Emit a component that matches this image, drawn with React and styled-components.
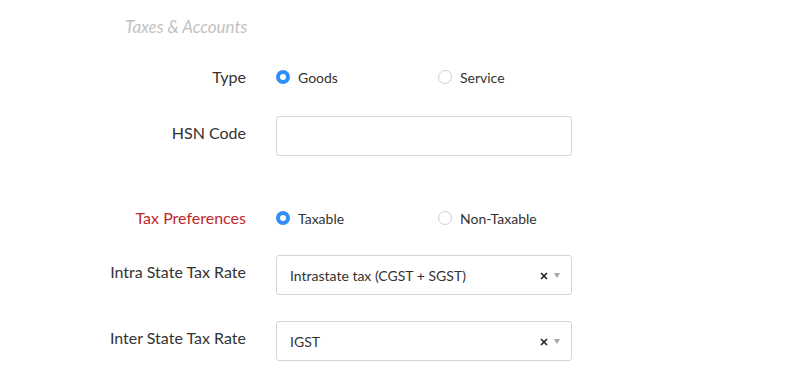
import React, { useState } from 'react';
import styled, { createGlobalStyle } from 'styled-components';

const GlobalStyle = createGlobalStyle`
    body {
        margin: 0;
        background: #ffffff;
        font-family: Lato, "Open Sans", sans-serif;
        color: #333333;
    }
`;

const Page = styled.div`
    padding: 16px 0 0 0;
`;

const Heading = styled.div`
    padding-left: 125px;
    font-size: 17px;
    font-style: italic;
    color: #c2c2c2;
    line-height: 22px;
`;

const Form = styled.div`
    display: grid;
    grid-template-columns: 246px 296px;
    column-gap: 30px;
    margin-top: 29px;
`;

const Label = styled.div`
    text-align: right;
    font-size: 16px;
    line-height: 20px;
    color: ${props => props.required ? '#c1272d' : '#333333'};
    padding-top: ${props => props.offset || 0}px;
    margin-top: ${props => props.gap || 0}px;
`;

const Field = styled.div`
    margin-top: ${props => props.gap || 0}px;
`;

const RadioGroup = styled.div`
    display: flex;
    height: 20px;
    align-items: center;
`;

const RadioOption = styled.label`
    display: flex;
    flex-shrink: 0;
    align-items: center;
    width: 162px;
    font-size: 14px;
    color: #333333;
    cursor: pointer;
`;

const RadioCircle = styled.span`
    box-sizing: border-box;
    flex-shrink: 0;
    width: 14px;
    height: 14px;
    border-radius: 50%;
    margin-right: 8px;
    border: ${props => props.checked ? '4px solid #2f8ff5' : '1px solid #cfcfcf'};
    background: #ffffff;
`;

const TextInput = styled.input`
    box-sizing: border-box;
    width: 296px;
    height: 40px;
    border: 1px solid #d3d3d3;
    border-radius: 3px;
    outline: none;
    padding: 0 13px;
    font-size: 14px;
    font-family: inherit;
`;

const Select = styled.div`
    box-sizing: border-box;
    width: 296px;
    height: 40px;
    border: 1px solid #d3d3d3;
    border-radius: 3px;
    display: flex;
    align-items: center;
    padding: 0 11px 0 13px;
    font-size: 14px;
    color: #333333;
`;

const SelectValue = styled.span`
    flex: 1;
`;

const Clear = styled.svg`
    width: 8px;
    height: 8px;
    margin-right: 6px;
    margin-top: 2px;
`;

const Caret = styled.span`
    width: 0;
    height: 0;
    border-left: 3.5px solid transparent;
    border-right: 3.5px solid transparent;
    border-top: 5px solid #a8a8a8;
`;

const Radio = ({ options, value, onChange }) => (
    <RadioGroup>
        {options.map(opt => (
            <RadioOption key={opt} onClick={() => onChange(opt)}>
                <RadioCircle checked={value === opt} />
                {opt}
            </RadioOption>
        ))}
    </RadioGroup>
);

const TaxSelect = ({ value }) => (
    <Select>
        <SelectValue>{value}</SelectValue>
        <Clear viewBox="0 0 8 8">
            <path d="M1 1 L7 7 M7 1 L1 7" stroke="#222" strokeWidth="1.6" />
        </Clear>
        <Caret />
    </Select>
);

const App = () => {
    const [type, setType] = useState('Goods');
    const [pref, setPref] = useState('Taxable');

    return (
        <Page>
            <GlobalStyle />
            <Heading>Taxes &amp; Accounts</Heading>
            <Form>
                <Label>Type</Label>
                <Field>
                    <Radio options={['Goods', 'Service']} value={type} onChange={setType} />
                </Field>

                <Label gap={29} offset={7}>HSN Code</Label>
                <Field gap={29}>
                    <TextInput type="text" />
                </Field>

                <Label gap={52} required>Tax Preferences</Label>
                <Field gap={52}>
                    <Radio options={['Taxable', 'Non-Taxable']} value={pref} onChange={setPref} />
                </Field>

                <Label gap={27} offset={7}>Intra State Tax Rate</Label>
                <Field gap={27}>
                    <TaxSelect value="Intrastate tax (CGST + SGST)" />
                </Field>

                <Label gap={26} offset={7}>Inter State Tax Rate</Label>
                <Field gap={26}>
                    <TaxSelect value="IGST" />
                </Field>
            </Form>
        </Page>
    );
};

export default App;
